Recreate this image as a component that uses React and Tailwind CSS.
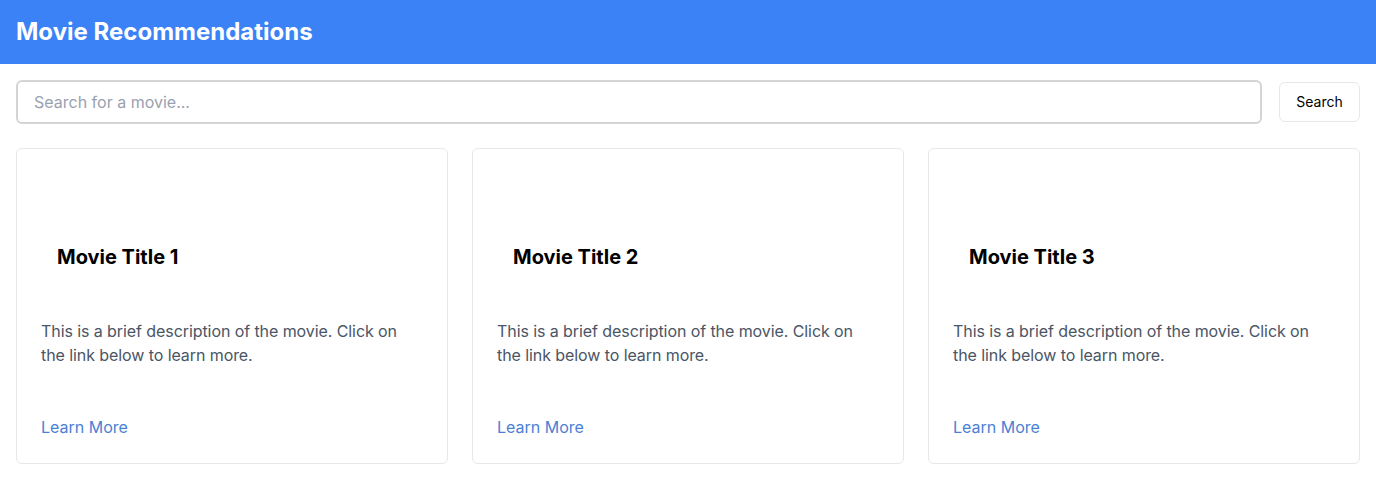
import { useState } from 'react';

const movies = [
  { id: 1, title: 'Movie Title 1' },
  { id: 2, title: 'Movie Title 2' },
  { id: 3, title: 'Movie Title 3' },
];

function MovieCard({ movie }) {
  return (
    <div className="flex flex-col rounded-md border border-gray-200 bg-white p-6">
      <h2 className="px-4 pt-[70px] text-xl font-bold leading-7 text-black">{movie.title}</h2>
      <p className="mt-12 text-base leading-6 tracking-[-0.005em] text-gray-600">
        This is a brief description of the movie. Click on the link below to learn more.
      </p>
      <a href="#" className="mt-12 text-base leading-6 text-[#4a80d6]">
        Learn More
      </a>
    </div>
  );
}

export default function App() {
  const [query, setQuery] = useState('');

  return (
    <div className="min-h-screen bg-white font-['Inter',sans-serif]">
      {/* Header */}
      <header className="flex h-16 items-center bg-[#3b82f6] px-4">
        <h1 className="text-2xl font-bold text-white">Movie Recommendations</h1>
      </header>

      <main className="px-4">
        {/* Search */}
        <div className="mt-4 flex items-center gap-[17px]">
          <input
            type="text"
            value={query}
            onChange={(e) => setQuery(e.target.value)}
            placeholder="Search for a movie..."
            className="h-11 flex-1 rounded-md border-2 border-[#d4d4d6] px-4 text-base text-gray-800 placeholder:text-gray-400 outline-none"
          />
          <button className="h-10 w-[81px] rounded-md border border-gray-200 bg-white text-sm text-black">
            Search
          </button>
        </div>

        {/* Movie list */}
        <div className="mt-6 grid grid-cols-3 gap-6">
          {movies.map((movie) => (
            <MovieCard key={movie.id} movie={movie} />
          ))}
        </div>
      </main>
    </div>
  );
}
